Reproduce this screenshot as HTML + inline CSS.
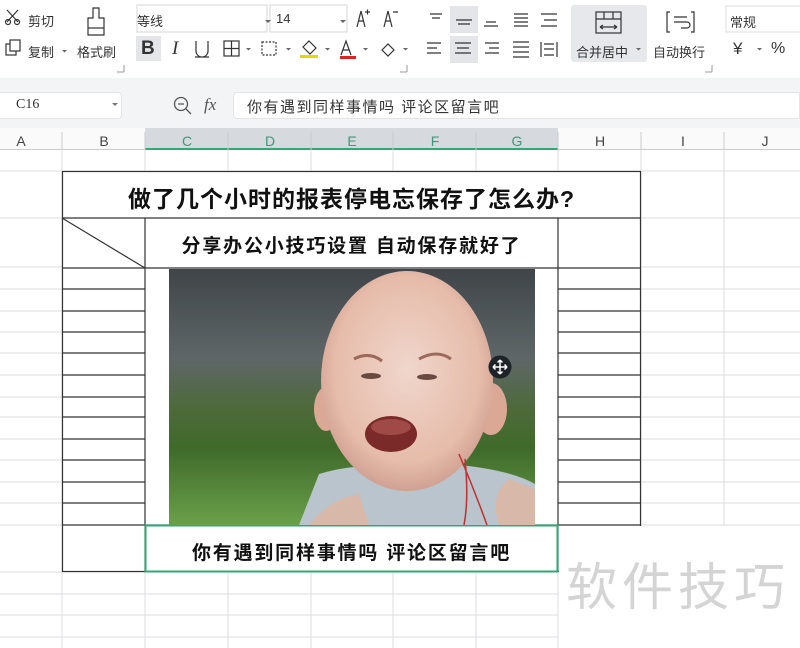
<!DOCTYPE html>
<html><head><meta charset="utf-8"><style>
*{margin:0;padding:0;box-sizing:border-box}
body{width:800px;height:648px;overflow:hidden;background:#fff;font-family:"Liberation Sans","Noto Sans CJK SC",sans-serif;position:relative;color:#222}
.a{position:absolute;white-space:nowrap}
.t{font-size:13px;color:#333}
</style></head><body>
<div class="a" style="left:0;top:0;width:800px;height:78px;background:#fff"></div>
<svg class="a" style="left:0;top:0" width="800" height="78">
 <rect x="136" y="36" width="25" height="25" fill="#e3e5e8"/>
 <rect x="450" y="6" width="28" height="27" fill="#e3e5e8"/>
 <rect x="450" y="36" width="28" height="27" fill="#e3e5e8"/>
 <rect x="571" y="5" width="76" height="57" rx="3" fill="#e6e8eb"/>
 <g stroke="#333" fill="none" stroke-width="1.2">
  <path d="M7 10 L18 22 M18 10 L7 22"/><circle cx="8" cy="22" r="2.5"/><circle cx="17" cy="22" r="2.5"/>
  <rect x="6" y="44" width="10" height="11"/><rect x="10" y="40" width="10" height="11" fill="#fff"/>
  <path d="M93 8 h6 v10 h5 v17 h-16 v-17 h5z"/><path d="M88 28 h16" />
  <path d="M137 5 h130 v27 h-130z M270 5 h77 v27 h-77z" stroke="#ddd"/>
  <path d="M357 27 l4 -16 l4 16 M358 21 h6 M365 12 h5 M367.5 9.5 v5"/>
  <path d="M384 27 l4 -16 l4 16 M385 21 h6 M393 12 h5"/>
  <path d="M196 41 v10 a6 6 0 0 0 12 0 v-10 M195 57 h14"/>
  <rect x="224" y="41" width="15" height="15"/><path d="M224 48.5 h15 M231.5 41 v15"/>
  <rect x="262" y="42" width="14" height="13" stroke-dasharray="2 1.5"/>
  <path d="M303 47 l6 -6 l7 7 l-6 6z"/>
  <path d="M341 55 l5 -14 l5 14 M343 50 h6"/>
  <path d="M382 50 l6 -6 l6 6 l-6 6z"/>
  <path d="M430 14 h12 M432 18 h8 M456 20 h16 M458 24 h12 M486 22 h10 M484 26 h14 M514 14 h14 M514 18 h14 M514 22 h14 M514 26 h14 M541 14 h16 M544 20 h13 M541 26 h16"/>
  <path d="M427 43 h14 M427 48 h10 M427 53 h14 M455 43 h16 M457 48 h12 M455 53 h16 M485 43 h14 M489 48 h10 M485 53 h14 M513 42 h16 M513 47 h16 M513 52 h16 M513 57 h16 M541 42 v15 M557 42 v15 M544 44 h10 M544 55 h10 M544 49 h10"/>
  <rect x="596" y="12" width="25" height="21"/><path d="M596 19 h25 M604 12 v7 M613 12 v7 M600 27 h17 M600 27 l3 -2 M600 27 l3 2 M617 27 l-3 -2 M617 27 l-3 2"/>
  <path d="M670 12 h-3 v20 h3 M691 12 h3 v20 h-3 M674 17 h13 M674 22 h13 a3 3 0 0 1 0 6 h-6"/>
 </g>
 <rect x="300" y="55" width="18" height="3" fill="#e8d800"/>
 <rect x="340" y="56" width="16" height="3" fill="#d22"/>
 <rect x="726" y="6" width="80" height="26" fill="none" stroke="#ddd"/>
 <path d="M124 65 v7 M117 72 h7 M407 65 v7 M400 72 h7 M712 65 v7 M705 72 h7" stroke="#999"/>
 <path d="M265 20 l3 3 l3 -3z M340 20 l3 3 l3 -3z M62 50 l2.5 2.5 l2.5 -2.5z M246 48 l2.5 2.5 l2.5 -2.5z M286 48 l2.5 2.5 l2.5 -2.5z M325 48 l2.5 2.5 l2.5 -2.5z M363 48 l2.5 2.5 l2.5 -2.5z M403 48 l2.5 2.5 l2.5 -2.5z M636 48 l2.5 2.5 l2.5 -2.5z M757 48 l2.5 2.5 l2.5 -2.5z" fill="#666"/>
</svg>
<div class="a t" style="left:28px;top:11px">剪切</div>
<div class="a t" style="left:28px;top:42px">复制</div>
<div class="a t" style="left:77px;top:42px">格式刷</div>
<div class="a t" style="left:137px;top:11px">等线</div>
<div class="a t" style="left:276px;top:11px">14</div>
<div class="a" style="left:141px;top:38px;font-size:19px;font-weight:bold;color:#333">B</div>
<div class="a" style="left:172px;top:38px;font-size:19px;font-style:italic;font-family:'Liberation Serif',serif;color:#333">I</div>
<div class="a t" style="left:576px;top:42px">合并居中</div>
<div class="a t" style="left:653px;top:42px">自动换行</div>
<div class="a t" style="left:730px;top:12px">常规</div>
<div class="a" style="left:733px;top:39px;font-size:17px;color:#333">¥</div>
<div class="a" style="left:771px;top:40px;font-size:16px;color:#333">%</div>
<div class="a" style="left:0;top:78px;width:800px;height:50px;background:#f3f4f6"></div>
<div class="a" style="left:0;top:92px;width:122px;height:27px;background:#fff;border:1px solid #e2e4e7;border-left:none;border-radius:0 4px 4px 0"></div>
<div class="a" style="left:16px;top:97px;font-size:14px;font-family:'Liberation Serif',serif;color:#333">C16</div>
<svg class="a" style="left:112px;top:103px" width="6" height="4"><path d="M0 0 l3 3 l3 -3z" fill="#777"/></svg>
<svg class="a" style="left:172px;top:94px" width="24" height="22"><circle cx="9" cy="10" r="6.5" fill="none" stroke="#555" stroke-width="1.3"/><path d="M6 10 h6 M14 15 l5 5" stroke="#555" stroke-width="1.3"/></svg>
<div class="a" style="left:204px;top:95px;font-size:17px;font-style:italic;font-family:'Liberation Serif',serif;color:#555">fx</div>
<div class="a" style="left:233px;top:92px;width:567px;height:27px;background:#fff;border:1px solid #e2e4e7;border-radius:4px 0 0 4px"></div>
<div class="a" style="left:247px;top:96px;font-size:15px;color:#333;letter-spacing:1.5px">你有遇到同样事情吗 评论区留言吧</div>
<div class="a" style="left:0;top:128px;width:800px;height:22px;background:#fafafa;border-bottom:1px solid #ccc"></div>
<div class="a" style="left:145px;top:128px;width:413px;height:22px;background:#d6d9de;border-bottom:2px solid #2eaa74"></div>
<svg class="a" style="left:0;top:128px" width="800" height="22">
 <path d="M62 4 v18 M145 4 v18 M228 4 v18 M311 4 v18 M393 4 v18 M476 4 v18 M558 4 v18 M641 4 v18 M724 4 v18" stroke="#ccc"/>
 <g font-family="Liberation Sans" font-size="14" text-anchor="middle">
  <text x="21" y="18" fill="#444">A</text><text x="104" y="18" fill="#444">B</text>
  <text x="187" y="18" fill="#3a9c72">C</text><text x="270" y="18" fill="#3a9c72">D</text><text x="352" y="18" fill="#3a9c72">E</text><text x="435" y="18" fill="#3a9c72">F</text><text x="517" y="18" fill="#3a9c72">G</text>
  <text x="600" y="18" fill="#444">H</text><text x="683" y="18" fill="#444">I</text><text x="765" y="18" fill="#444">J</text>
 </g>
</svg>
<svg class="a" style="left:0;top:150px" width="800" height="498">
 <g stroke="#dcdde0" stroke-width="1">
  <path d="M0 21h800 M0 68h800 M0 117h800 M0 139h800 M0 161h800 M0 182h800 M0 203h800 M0 225h800 M0 247h800 M0 267h800 M0 289h800 M0 310h800 M0 332h800 M0 353h800 M0 375h800 M0 422h558 M0 444h558 M0 465h558 M0 487h558"/>
  <path d="M62 0v498 M145 0v498 M228 0v498 M311 0v498 M393 0v498 M476 0v498 M558 0v498 M641 0v375 M724 0v375"/>
 </g>
 <rect x="62" y="21" width="579" height="401" fill="#fff"/>
 <g stroke="#333" stroke-width="1.2" fill="none">
  <rect x="62.5" y="21.5" width="578" height="400"/>
  <path d="M62 68h579 M62 118h579 M62 375h579 M145 68v354 M558 68v354 M62 68 L145 118"/>
  <path d="M62 139h83 M62 161h83 M62 182h83 M62 203h83 M62 225h83 M62 247h83 M62 267h83 M62 289h83 M62 310h83 M62 332h83 M62 353h83"/>
  <path d="M558 139h83 M558 161h83 M558 182h83 M558 203h83 M558 225h83 M558 247h83 M558 267h83 M558 289h83 M558 310h83 M558 332h83 M558 353h83"/>
 </g>
 <rect x="145.5" y="375.5" width="412" height="46" fill="none" stroke="#2eaa74" stroke-width="2"/>
 <rect x="559" y="376" width="241" height="122" fill="#fff"/>
</svg>
<div class="a" style="left:62px;top:180px;width:579px;text-align:center;font-size:23px;letter-spacing:1px;font-weight:bold;color:#111">做了几个小时的报表停电忘保存了怎么办?</div>
<div class="a" style="left:145px;top:231px;width:413px;text-align:center;font-size:19px;letter-spacing:1.8px;font-weight:bold;color:#111">分享办公小技巧设置 自动保存就好了</div>
<div class="a" style="left:145px;top:538px;width:413px;text-align:center;font-size:19px;letter-spacing:1.8px;font-weight:bold;color:#111">你有遇到同样事情吗 评论区留言吧</div>
<svg class="a" style="left:169px;top:269px" width="366" height="256" viewBox="0 0 366 256">
 <defs>
  <linearGradient id="bg" x1="0" y1="0" x2="0" y2="1"><stop offset="0" stop-color="#3f4548"/><stop offset="0.35" stop-color="#5f6668"/><stop offset="0.55" stop-color="#4d6a3a"/><stop offset="0.7" stop-color="#3f6a2a"/><stop offset="1" stop-color="#6aa04a"/></linearGradient>
  <radialGradient id="sk" cx="0.5" cy="0.45" r="0.6"><stop offset="0" stop-color="#f0d6cc"/><stop offset="0.7" stop-color="#e6bcaa"/><stop offset="1" stop-color="#c8978a"/></radialGradient>
 </defs>
 <rect width="366" height="256" fill="url(#bg)"/>
 <path d="M130 256 L150 205 Q200 190 240 205 L280 195 Q340 200 366 215 L366 256Z" fill="#b9c4cc"/>
 <path d="M140 256 Q160 230 190 225 L200 256Z M330 256 Q320 225 340 210 L366 220 L366 256Z" fill="#d8b8a8"/>
 <ellipse cx="322" cy="140" rx="16" ry="26" fill="#dba896"/>
 <ellipse cx="157" cy="140" rx="12" ry="22" fill="#dba896"/>
 <ellipse cx="238" cy="112" rx="86" ry="110" fill="url(#sk)"/>
 <path d="M185 90 q15 -8 28 2 M250 90 q18 -10 32 0" stroke="#9b6a5a" stroke-width="3" fill="none"/>
 <ellipse cx="202" cy="107" rx="10" ry="3" fill="#6a4a40"/><ellipse cx="258" cy="108" rx="10" ry="3" fill="#6a4a40"/>
 <ellipse cx="222" cy="165" rx="26" ry="18" fill="#7a2a28"/>
 <ellipse cx="222" cy="158" rx="20" ry="8" fill="#a04a48"/>
 <path d="M290 185 Q305 220 318 256 M296 190 Q300 230 295 256" stroke="#c03030" stroke-width="1.5" fill="none"/>
</svg>
<svg class="a" style="left:488px;top:355px" width="24" height="24"><circle cx="12" cy="12" r="11.5" fill="#1e2329"/><path d="M12 5v14M5 12h14M12 5l-2.5 2.5M12 5l2.5 2.5M12 19l-2.5-2.5M12 19l2.5-2.5M5 12l2.5-2.5M5 12l2.5 2.5M19 12l-2.5-2.5M19 12l-2.5 2.5" stroke="#fff" stroke-width="1.5" fill="none"/></svg>
<div class="a" style="left:566px;top:558px;font-size:51px;color:#d4d4d4;letter-spacing:5px;line-height:60px">软件技巧</div>
</body></html>
